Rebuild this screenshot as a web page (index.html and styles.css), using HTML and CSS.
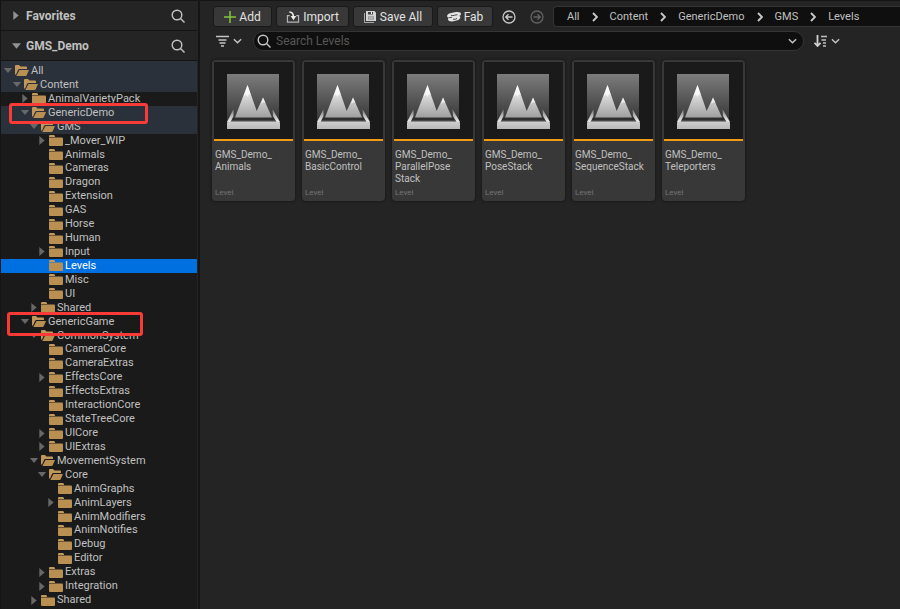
FILE: index.html
```html
<!DOCTYPE html>
<html lang="en">
<head>
<meta charset="utf-8">
<title>Content Browser</title>
<link rel="stylesheet" href="styles.css">
</head>
<body>
<svg class="defs" aria-hidden="true">
  <defs>
    <linearGradient id="sky" x1="0" y1="0" x2="0" y2="1"><stop offset="0" stop-color="#7c7c7c"/><stop offset="1" stop-color="#343434"/></linearGradient>
    <linearGradient id="peak" x1="0" y1="0" x2="0" y2="1"><stop offset="0" stop-color="#f8f8f8"/><stop offset=".4" stop-color="#d4d4d4"/><stop offset="1" stop-color="#a0a0a0"/></linearGradient>
    <linearGradient id="base" x1="0" y1="0" x2="0" y2="1"><stop offset="0" stop-color="#cfcfcf"/><stop offset="1" stop-color="#b8b8b8"/></linearGradient>
    <linearGradient id="wall" x1="0" y1="0" x2="0" y2="1"><stop offset="0" stop-color="#777"/><stop offset="1" stop-color="#f2f2f2"/></linearGradient>
  </defs>
  <symbol id="folder" viewBox="0 0 14 11"><path fill="#c29a5b" d="M0 1q0-1 1-1h4l1 1v1H0z"/><path fill="#b98f52" d="M0 2.600h13q1 0 1 1V10q0 1-1 1H1q-1 0-1-1z"/></symbol>
  <symbol id="open" viewBox="0 0 14 11"><path fill="#c2985a" d="M0 1q0-1 1-1h3l1.500 1.500H11q1 0 1 1V4H4.500Q3.500 4 3 5L1 9.500H0z"/><path fill="#b98f52" d="M4.500 5H14l-2.300 5.200q-.3.800-1.200.800H1.300z"/></symbol>
  <symbol id="down" viewBox="0 0 10 6"><path fill="#686868" d="M0 0h10L5 6z"/></symbol>
  <symbol id="right" viewBox="0 0 6 10"><path fill="#686868" d="M0 0v10l6-5z"/></symbol>
  <symbol id="search" viewBox="0 0 14 14"><g fill="none" stroke="#c4c4c4" stroke-width="1.400"><circle cx="6" cy="6" r="4.800"/><path d="m9.500 9.500 4 4"/></g></symbol>
  <symbol id="chev" viewBox="0 0 10 6"><path fill="none" stroke="#c4c4c4" stroke-width="1.600" d="m1 1 4 4 4-4"/></symbol>
  <symbol id="sep" viewBox="0 0 6 10"><path fill="none" stroke="#c8c8c8" stroke-width="1.900" d="m1 1 4 4-4 4"/></symbol>
  <symbol id="level" viewBox="0 0 53 55">
    <path fill="url(#sky)" d="M0 0h52v48H0z"/>
    <path fill="#2e2e2e" d="M5 43.500h42l3 4.500H2z"/>
    <path fill="#606060" d="M4 46.500h44v1H4z"/>
    <path fill="url(#peak)" d="M20.500 11 29.700 37 36 23.500 45 43.500H8z"/>
    <path fill="#fff" fill-opacity=".7" d="M20.500 11l3.500 10-2-1-1.500 3-1.500-2.500-2.500 2zM36 23.500l2.500 5.500-2-1-2.500 2z"/>
    <path fill="url(#wall)" d="M6.500 35 0 48h3.500l3-6zM45.500 35 53 48h-3.500l-3.500-6z"/>
    <path fill="url(#base)" d="M1 47.500h51l1 1V55H0v-6.500z"/>
  </symbol>
</svg>

<div class="browser">
  <aside class="sources">
    <header class="section">
      <button class="section-title" type="button"><svg class="arrow-right"><use href="#right"/></svg>Favorites</button>
      <button class="icon-button" type="button" aria-label="Search favorites"><svg class="search-icon"><use href="#search"/></svg></button>
    </header>
    <header class="section section-open">
      <button class="section-title" type="button"><svg class="arrow-down"><use href="#down"/></svg>GMS_Demo</button>
      <button class="icon-button" type="button" aria-label="Search folders"><svg class="search-icon"><use href="#search"/></svg></button>
    </header>
    <ul class="tree">
      <li class="row path"><svg class="toggle down"><use href="#down"/></svg><svg class="folder"><use href="#open"/></svg>All</li>
      <li class="row path d1"><svg class="toggle down"><use href="#down"/></svg><svg class="folder"><use href="#open"/></svg>Content</li>
      <li class="row d2"><svg class="toggle"><use href="#right"/></svg><svg class="folder"><use href="#folder"/></svg>AnimalVarietyPack</li>
      <li class="row path d2"><svg class="toggle down"><use href="#down"/></svg><svg class="folder"><use href="#open"/></svg>GenericDemo<span class="mark mark-demo"></span></li>
      <li class="row path d3"><svg class="toggle down"><use href="#down"/></svg><svg class="folder"><use href="#open"/></svg>GMS</li>
      <li class="row d4"><svg class="toggle"><use href="#right"/></svg><svg class="folder"><use href="#folder"/></svg>_Mover_WIP</li>
      <li class="row d4"><span class="toggle"></span><svg class="folder"><use href="#folder"/></svg>Animals</li>
      <li class="row d4"><span class="toggle"></span><svg class="folder"><use href="#folder"/></svg>Cameras</li>
      <li class="row d4"><span class="toggle"></span><svg class="folder"><use href="#folder"/></svg>Dragon</li>
      <li class="row d4"><span class="toggle"></span><svg class="folder"><use href="#folder"/></svg>Extension</li>
      <li class="row d4"><span class="toggle"></span><svg class="folder"><use href="#folder"/></svg>GAS</li>
      <li class="row d4"><span class="toggle"></span><svg class="folder"><use href="#folder"/></svg>Horse</li>
      <li class="row d4"><span class="toggle"></span><svg class="folder"><use href="#folder"/></svg>Human</li>
      <li class="row d4"><svg class="toggle"><use href="#right"/></svg><svg class="folder"><use href="#folder"/></svg>Input</li>
      <li class="row selected d4"><span class="toggle"></span><svg class="folder"><use href="#folder"/></svg>Levels</li>
      <li class="row d4"><span class="toggle"></span><svg class="folder"><use href="#folder"/></svg>Misc</li>
      <li class="row d4"><span class="toggle"></span><svg class="folder"><use href="#folder"/></svg>UI</li>
      <li class="row d3"><svg class="toggle"><use href="#right"/></svg><svg class="folder"><use href="#folder"/></svg>Shared</li>
      <li class="row d2"><svg class="toggle down"><use href="#down"/></svg><svg class="folder"><use href="#open"/></svg>GenericGame<span class="mark mark-game"></span></li>
      <li class="row d3"><svg class="toggle down"><use href="#down"/></svg><svg class="folder"><use href="#open"/></svg>CommonSystem</li>
      <li class="row d4"><span class="toggle"></span><svg class="folder"><use href="#folder"/></svg>CameraCore</li>
      <li class="row d4"><span class="toggle"></span><svg class="folder"><use href="#folder"/></svg>CameraExtras</li>
      <li class="row d4"><svg class="toggle"><use href="#right"/></svg><svg class="folder"><use href="#folder"/></svg>EffectsCore</li>
      <li class="row d4"><span class="toggle"></span><svg class="folder"><use href="#folder"/></svg>EffectsExtras</li>
      <li class="row d4"><span class="toggle"></span><svg class="folder"><use href="#folder"/></svg>InteractionCore</li>
      <li class="row d4"><span class="toggle"></span><svg class="folder"><use href="#folder"/></svg>StateTreeCore</li>
      <li class="row d4"><svg class="toggle"><use href="#right"/></svg><svg class="folder"><use href="#folder"/></svg>UICore</li>
      <li class="row d4"><svg class="toggle"><use href="#right"/></svg><svg class="folder"><use href="#folder"/></svg>UIExtras</li>
      <li class="row d3"><svg class="toggle down"><use href="#down"/></svg><svg class="folder"><use href="#open"/></svg>MovementSystem</li>
      <li class="row d4"><svg class="toggle down"><use href="#down"/></svg><svg class="folder"><use href="#open"/></svg>Core</li>
      <li class="row d5"><span class="toggle"></span><svg class="folder"><use href="#folder"/></svg>AnimGraphs</li>
      <li class="row d5"><svg class="toggle"><use href="#right"/></svg><svg class="folder"><use href="#folder"/></svg>AnimLayers</li>
      <li class="row d5"><span class="toggle"></span><svg class="folder"><use href="#folder"/></svg>AnimModifiers</li>
      <li class="row d5"><span class="toggle"></span><svg class="folder"><use href="#folder"/></svg>AnimNotifies</li>
      <li class="row d5"><span class="toggle"></span><svg class="folder"><use href="#folder"/></svg>Debug</li>
      <li class="row d5"><span class="toggle"></span><svg class="folder"><use href="#folder"/></svg>Editor</li>
      <li class="row d4"><svg class="toggle"><use href="#right"/></svg><svg class="folder"><use href="#folder"/></svg>Extras</li>
      <li class="row d4"><svg class="toggle"><use href="#right"/></svg><svg class="folder"><use href="#folder"/></svg>Integration</li>
      <li class="row d3"><svg class="toggle"><use href="#right"/></svg><svg class="folder"><use href="#folder"/></svg>Shared</li>
      <li class="row d1"><svg class="toggle"><use href="#right"/></svg><svg class="folder"><use href="#folder"/></svg>Plugins</li>
    </ul>
  </aside>

  <main class="content">
    <div class="toolbar">
      <button class="tool add" type="button"><svg class="tool-icon" viewBox="0 0 12 12"><path stroke="#83c43c" stroke-width="1.500" d="M6 0v12M0 6h12"/></svg>Add</button>
      <button class="tool import" type="button"><svg class="tool-icon wide" viewBox="0 0 14 13"><path fill="none" stroke="#b4b4b4" stroke-width="1.300" d="M3.500 5H1v7h12V5h-2.500"/><path fill="none" stroke="#eee" stroke-width="1.700" d="M3 1q4.500 0 4.500 6"/><path fill="#eee" d="M4.500 5.500h6L7.500 10z"/></svg>Import</button>
      <button class="tool save" type="button"><svg class="tool-icon" viewBox="0 0 12 12"><path fill="none" stroke="#aaa" d="M.5 2v9.500H10"/><path fill="#d4d4d4" d="M2 0h8.500L12 1.500V10H2z"/><path fill="#444" d="M4 1h5v2.500H4z"/><path fill="#777" d="M4 5.500h6v3H4z"/><path fill="#eee" d="M7 1h1v2H7zM4.500 6.500h5v1h-5z"/></svg>Save All</button>
      <button class="tool fab" type="button"><svg class="tool-icon wide" viewBox="0 0 14 11"><path fill="#e4e4e4" d="M0 4.500Q.5 2 4 1.500L9 .500Q14 0 14 2.500 14 4 12 4.600 14 5 13 7 12 9 8.500 9.200L5 10Q1 10 1 7.500q0-1 1-1.500Q0 6 0 4.500z"/><path fill="none" stroke="#383838" stroke-width=".9" d="M4 3.800q2 .7 3.500 0t3-.5M2 6.200l3-.4M6 7.700q2.500.5 4-.8"/></svg>Fab</button>
      <button class="nav" type="button" aria-label="Back"><svg viewBox="0 0 14 14"><g fill="none" stroke="#c8c8c8" stroke-width="1.300"><circle cx="7" cy="7" r="6"/><path d="M10.500 7H4m2.500-2.800L3.700 7l2.800 2.800"/></g></svg></button>
      <button class="nav" type="button" aria-label="Forward"><svg viewBox="0 0 14 14"><g fill="none" stroke="#626262" stroke-width="1.300"><circle cx="7" cy="7" r="6"/><path d="M3.500 7H10M7.500 4.200 10.300 7 7.500 9.800"/></g></svg></button>
      <nav class="crumbs" aria-label="Path">
        <a href="#">All</a><svg class="sep"><use href="#sep"/></svg><a href="#">Content</a><svg class="sep"><use href="#sep"/></svg><a href="#">GenericDemo</a><svg class="sep"><use href="#sep"/></svg><a href="#">GMS</a><svg class="sep"><use href="#sep"/></svg><a href="#">Levels</a>
      </nav>
    </div>
    <div class="filters">
      <button class="menu" type="button" aria-label="Filters"><svg class="menu-icon" viewBox="0 0 13 12"><path stroke="#c4c4c4" stroke-width="1.400" d="M0 1.500h13M2.500 5h8M3.500 8h6M5 11h3"/></svg><svg class="chev"><use href="#chev"/></svg></button>
      <label class="search"><svg class="search-icon"><use href="#search"/></svg><input type="text" placeholder="Search Levels" aria-label="Search Levels"><svg class="chev"><use href="#chev"/></svg></label>
      <button class="menu sort" type="button" aria-label="Sort"><svg class="menu-icon" viewBox="0 0 13 12"><path fill="none" stroke="#d0d0d0" stroke-width="1.800" d="M3.500 0v11M.5 7.800l3 3.200 3-3.200"/><path stroke="#c0c0c0" stroke-width="1.400" d="M7 1.500h6M7.500 5H12M9 8h3M9 11h3"/></svg><svg class="chev"><use href="#chev"/></svg></button>
    </div>
    <div class="assets">
      <article class="card"><div class="thumb"><svg class="level-icon"><use href="#level"/></svg></div><h2>GMS_Demo_<wbr>Animals</h2><p>Level</p></article>
      <article class="card"><div class="thumb"><svg class="level-icon"><use href="#level"/></svg></div><h2>GMS_Demo_<wbr>BasicControl</h2><p>Level</p></article>
      <article class="card"><div class="thumb"><svg class="level-icon"><use href="#level"/></svg></div><h2>GMS_Demo_<wbr>ParallelPose<wbr>Stack</h2><p>Level</p></article>
      <article class="card"><div class="thumb"><svg class="level-icon"><use href="#level"/></svg></div><h2>GMS_Demo_<wbr>PoseStack</h2><p>Level</p></article>
      <article class="card"><div class="thumb"><svg class="level-icon"><use href="#level"/></svg></div><h2>GMS_Demo_<wbr>SequenceStack</h2><p>Level</p></article>
      <article class="card"><div class="thumb"><svg class="level-icon"><use href="#level"/></svg></div><h2>GMS_Demo_<wbr>Teleporters</h2><p>Level</p></article>
    </div>
  </main>
</div>
</body>
</html>
```
FILE: styles.css
```css
* { box-sizing: border-box; }

body {
  margin: 0;
  background: #242424;
  color: #c0c0c0;
  font: 12px/14px Roboto, sans-serif;
}

button, input { font: inherit; color: inherit; }
button { padding: 0; border: 0; background: none; }
svg { display: block; flex: none; }
.defs { position: absolute; width: 0; height: 0; }

.browser {
  display: grid;
  grid-template-columns: 198px 1fr;
  column-gap: 2px;
  height: 100vh;
  overflow: hidden;
  border-top: 1px solid #151515;
  background: #151515;
}

/* Sources panel */
.sources {
  display: flex;
  flex-direction: column;
  min-height: 0;
  border-left: 1px solid #151515;
  border-right: 1px solid #242424;
  background: #1a1a1a;
}

.section {
  display: flex;
  align-items: center;
  justify-content: space-between;
  height: 30px;
  padding: 0 12px;
  border-bottom: 1px solid #141414;
  background: #242424;
}

.section-open { padding-left: 11px; }

.section-title {
  display: flex;
  align-items: center;
  gap: 7px;
  font-weight: 700;
}

.section-open .section-title { gap: 5px; }

.arrow-right { width: 6px; height: 9px; }
.arrow-down { width: 9px; height: 6px; }
.section .arrow-right, .section .arrow-down { filter: brightness(1.4); }
.search-icon { width: 14px; height: 14px; }

.tree {
  display: grid;
  flex: 1;
  grid-auto-rows: 1fr;
  min-height: 0;
  margin: 0 0 -12px;
  padding: 0;
  border-top: 3px solid #2b313a;
  font-size: 11px;
  list-style: none;
}

.row {
  position: relative;
  display: flex;
  align-items: center;
  min-height: 0;
  padding-left: 2px;
  white-space: nowrap;
}

.path { background: #2b313a; }
.selected { background: #0070e0; color: #fff; }
.d1 { padding-left: 11px; }
.d2 { padding-left: 19px; }
.d3 { padding-left: 28px; }
.d4 { padding-left: 36px; }
.d5 { padding-left: 45px; }

.toggle { width: 10px; height: 9px; }
.toggle.down { height: 5px; }
.folder { width: 14px; height: 11px; margin: 0 2px; }

.mark {
  position: absolute;
  z-index: 1;
  top: -3px;
  left: 8px;
  width: 139px;
  height: 21px;
  border: 3px solid #f93a37;
  border-radius: 3px;
}

.mark-game { left: 6px; width: 136px; height: 24px; }

/* Content panel */
.content {
  min-width: 0;
  background: #242424;
}

.toolbar {
  display: flex;
  align-items: center;
  height: 30px;
  padding: 5px 0 4px 13px;
}

.tool {
  display: flex;
  align-items: center;
  justify-content: center;
  gap: 3px;
  width: 59px;
  height: 21px;
  margin-right: 4px;
  border: 1px solid #191919;
  border-radius: 3px;
  background: #383838;
  color: #e2e2e2;
}

.import { width: 73px; }
.save { width: 80px; gap: 4px; }
.fab { width: 56px; }
.tool-icon { width: 12px; height: 12px; }
.tool-icon.wide { width: 14px; }

.nav { margin: 0 4px 0 5px; }
.nav + .nav { margin: 0 9px 0 10px; }
.nav svg { width: 14px; height: 14px; }

.crumbs {
  display: flex;
  flex: 1;
  align-items: center;
  gap: 12px;
  height: 21px;
  padding-left: 13px;
  border: 1px solid #343434;
  border-right: 0;
  border-radius: 4px 0 0 4px;
  background: #0f0f0f;
  font-size: 11px;
}

.crumbs a { color: inherit; text-decoration: none; }
.sep { width: 6px; height: 10px; }

.filters {
  display: flex;
  align-items: center;
  height: 20px;
  margin-right: 60px;
  padding-left: 16px;
}

.menu { display: flex; align-items: center; gap: 4px; }
.menu-icon { width: 13px; height: 12px; }
.chev { width: 9px; height: 6px; }

.search {
  display: flex;
  flex: 1;
  align-items: center;
  gap: 5px;
  height: 20px;
  margin: 0 10px 0 11px;
  padding: 0 6px 0 3px;
  border: 1px solid #343434;
  border-radius: 10px;
  background: #0f0f0f;
}

.search input {
  flex: 1;
  min-width: 0;
  padding: 0;
  border: 0;
  outline: 0;
  background: none;
}

.search input::placeholder { color: #575757; opacity: 1; }

.assets {
  display: flex;
  flex-wrap: wrap;
  gap: 7px;
  padding: 9px 0 0 12px;
}

.card {
  display: flex;
  flex-direction: column;
  width: 83px;
  min-height: 141px;
  padding: 2px;
  border-radius: 4px;
  background: #383838;
  box-shadow: 0 0 3px #111;
}

.thumb {
  display: flex;
  justify-content: center;
  padding: 12px 0 10px;
  border-bottom: 2px solid #f09c14;
  background: #1a1a1a;
}

.level-icon { width: 53px; height: 55px; }

.card h2 {
  flex: 1;
  margin: 8px 0 0 1px;
  font-size: 10px;
  font-weight: 400;
  line-height: 12px;
}

.card p {
  margin: 0 0 0 1px;
  color: #757575;
  font-size: 8px;
  line-height: 12px;
}
```
